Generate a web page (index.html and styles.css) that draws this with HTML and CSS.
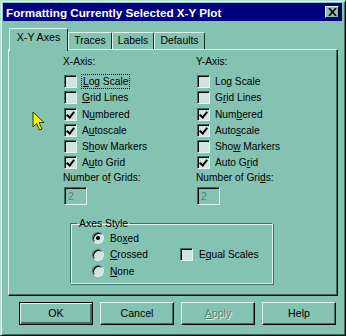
FILE: index.html
```html
<!DOCTYPE html>
<html lang="en">
<head>
    <meta charset="UTF-8">
    <title>Formatting Currently Selected X-Y Plot</title>
    <link rel="stylesheet" href="styles.css">
</head>
<body>
<div class="window">
    <div class="titlebar">
        <span class="title">Formatting Currently Selected X-Y Plot</span>
        <span class="close">
            <svg width="9" height="8" viewBox="0 0 9 8"><path d="M1 0 L8 8 M8 0 L1 8" stroke="#000" stroke-width="1.6"/></svg>
        </span>
    </div>

    <div class="tabs">
        <div class="tab active" style="width:59px">X-Y Axes</div>
        <div class="tab" style="width:44px">Traces</div>
        <div class="tab" style="width:42px">Labels</div>
        <div class="tab" style="width:51px">Defaults</div>
    </div>

    <div class="panel">
        <div class="axes">
            <div class="col">
                <div class="head">X-Axis:</div>
                <div class="row"><span class="box"></span><span class="focus"><u>L</u>og Scale</span></div>
                <div class="row"><span class="box"></span><span><u>G</u>rid Lines</span></div>
                <div class="row"><span class="box on"></span><span>N<u>u</u>mbered</span></div>
                <div class="row"><span class="box on"></span><span>A<u>u</u>toscale</span></div>
                <div class="row"><span class="box"></span><span>S<u>h</u>ow Markers</span></div>
                <div class="row"><span class="box on"></span><span>A<u>u</u>to Grid</span></div>
                <div class="head grids">Number o<u>f</u> Grids:</div>
                <div class="field">2</div>
            </div>
            <div class="col">
                <div class="head">Y-Axis:</div>
                <div class="row"><span class="box"></span><span>Lo<u>g</u> Scale</span></div>
                <div class="row"><span class="box"></span><span>G<u>r</u>id Lines</span></div>
                <div class="row"><span class="box on"></span><span>Num<u>b</u>ered</span></div>
                <div class="row"><span class="box on"></span><span>Auto<u>s</u>cale</span></div>
                <div class="row"><span class="box"></span><span>Sho<u>w</u> Markers</span></div>
                <div class="row"><span class="box on"></span><span>Auto G<u>r</u>id</span></div>
                <div class="head grids">Number of Gri<u>d</u>s:</div>
                <div class="field">2</div>
            </div>
        </div>

        <fieldset class="group">
            <legend>Axes Style</legend>
            <div class="row"><span class="radio on"></span><span>Bo<u>x</u>ed</span></div>
            <div class="row"></div>
            <div class="row"><span class="radio"></span><span><u>C</u>rossed</span></div>
            <div class="row"><span class="box"></span><span>E<u>q</u>ual Scales</span></div>
            <div class="row"><span class="radio"></span><span><u>N</u>one</span></div>
        </fieldset>
    </div>

    <div class="buttons">
        <div class="btn default">OK</div>
        <div class="btn">Cancel</div>
        <div class="btn disabled"><u>A</u>pply</div>
        <div class="btn">Help</div>
    </div>

    <svg class="cursor" width="14" height="21" viewBox="0 0 14 21">
        <path d="M1 1 L1 16 L4.5 12.5 L7.5 19 L10 18 L7 11.5 L12 11.5 Z" fill="#f4f000" stroke="#2a3a10" stroke-width="1"/>
    </svg>
</div>
</body>
</html>
```

FILE: styles.css
```css
body {
    margin: 0;
    background: #84c2b2;
    font-family: "Liberation Sans", Arial, sans-serif;
    font-size: 10.2px;
    color: #000;
}
u { text-decoration: underline; text-underline-offset: 1px; }

.window {
    position: relative;
    width: 346px;
    height: 336px;
    box-sizing: border-box;
    background: #84c2b2;
    border: 1px solid;
    border-color: #b8dcd2 #000 #000 #b8dcd2;
    box-shadow: inset 1px 1px #e2f4ee, inset -1px -1px #3e6e62;
    padding: 2px 3px 0 2px;
}
.titlebar {
    height: 18px;
    background: #000080;
    display: flex;
    align-items: center;
    justify-content: space-between;
    padding: 0 3px 0 3px;
}
.title {
    color: #fff;
    font-weight: bold;
    font-size: 11.7px;
}
.close {
    width: 14px;
    height: 12px;
    box-sizing: border-box;
    background: #84c2b2;
    border: 1px solid;
    border-color: #e2f4ee #000 #000 #e2f4ee;
    display: flex;
    align-items: center;
    justify-content: center;
}

.tabs {
    display: flex;
    align-items: flex-end;
    height: 21px;
    margin: 7px 0 0 6px;
}
.tab {
    height: 17px;
    box-sizing: border-box;
    border: 1px solid;
    border-bottom: none;
    border-color: #e2f4ee #1c2e28 transparent #e2f4ee;
    border-radius: 2px 2px 0 0;
    text-align: center;
    line-height: 15px;
    font-size: 10.4px;
}
.tab.active {
    position: relative;
    z-index: 1;
    height: 23px;
    margin-bottom: -2px;
    background: #84c2b2;
    line-height: 17px;
    font-size: 10.6px;
}

.panel {
    width: 330px;
    height: 247px;
    box-sizing: border-box;
    margin-left: 5px;
    border: 1px solid;
    border-color: #e2f4ee #000 #000 #e2f4ee;
    box-shadow: inset -1px -1px #3e6e62;
    padding: 5px 0 0 54px;
}
.axes {
    display: flex;
}
.col {
    width: 133px;
}
.head {
    height: 18.4px;
    line-height: 13px;
}
.head.grids {
    height: 15px;
}
.row {
    height: 16.25px;
    display: flex;
    align-items: center;
    gap: 5px;
    white-space: nowrap;
}
.col .row { padding-left: 1px; }
.box {
    width: 13px;
    height: 13px;
    box-sizing: border-box;
    flex: none;
    background: #cfe5de;
    border: 1px solid;
    border-color: #3e6e62 #e2f4ee #e2f4ee #3e6e62;
    box-shadow: inset 1px 1px #000;
    position: relative;
}
.box.on::after {
    content: "";
    position: absolute;
    left: 3px;
    top: 1px;
    width: 3px;
    height: 6px;
    border: solid #000;
    border-width: 0 2px 2px 0;
    transform: rotate(40deg);
}
.focus {
    outline: 1px dotted #000;
    outline-offset: 1px;
    margin-left: 1px;
}
.field {
    width: 23px;
    height: 18px;
    box-sizing: border-box;
    margin: 1px 0 0 1px;
    border: 1px solid;
    border-color: #3e6e62 #e2f4ee #e2f4ee #3e6e62;
    box-shadow: inset 1px 1px #000;
    color: #4f8677;
    padding: 2px 0 0 3px;
    font-size: 10.6px;
}

.group {
    width: 203px;
    height: 67px;
    box-sizing: border-box;
    margin: 12px 0 0 7px;
    padding: 0 0 0 21px;
    border: 1px solid;
    border-color: #3e6e62 #e2f4ee #e2f4ee #3e6e62;
    box-shadow: inset 1px 1px #e2f4ee, 1px 1px #3e6e62;
    display: grid;
    grid-template-columns: 88px auto;
    align-content: start;
}
.group legend {
    padding: 0 2px;
    margin-left: -15px;
    line-height: 13px;
    font-size: 10.4px;
}
.group .row { height: 16.6px; gap: 6px; }
.radio {
    width: 12px;
    height: 12px;
    box-sizing: border-box;
    flex: none;
    border-radius: 50%;
    background: #cfe5de;
    border: 1px solid;
    border-color: #3e6e62 #e2f4ee #e2f4ee #3e6e62;
    box-shadow: inset 1px 1px #000;
    display: flex;
    align-items: center;
    justify-content: center;
}
.radio.on::after {
    content: "";
    width: 4px;
    height: 4px;
    border-radius: 50%;
    background: #000;
}

.buttons {
    display: flex;
    gap: 7px;
    margin: 6px 0 0 16px;
}
.btn {
    width: 74px;
    height: 23px;
    box-sizing: border-box;
    border: 1px solid;
    border-color: #e2f4ee #000 #000 #e2f4ee;
    box-shadow: inset -1px -1px #3e6e62;
    text-align: center;
    line-height: 21px;
    font-size: 10.6px;
}
.btn.default {
    border-color: #000;
    box-shadow: inset 1px 1px #e2f4ee, inset -2px -2px #3e6e62;
}
.btn.disabled {
    color: #4f8677;
    text-shadow: 1px 1px #e2f4ee;
}

.cursor {
    position: absolute;
    left: 31px;
    top: 110px;
}
```
